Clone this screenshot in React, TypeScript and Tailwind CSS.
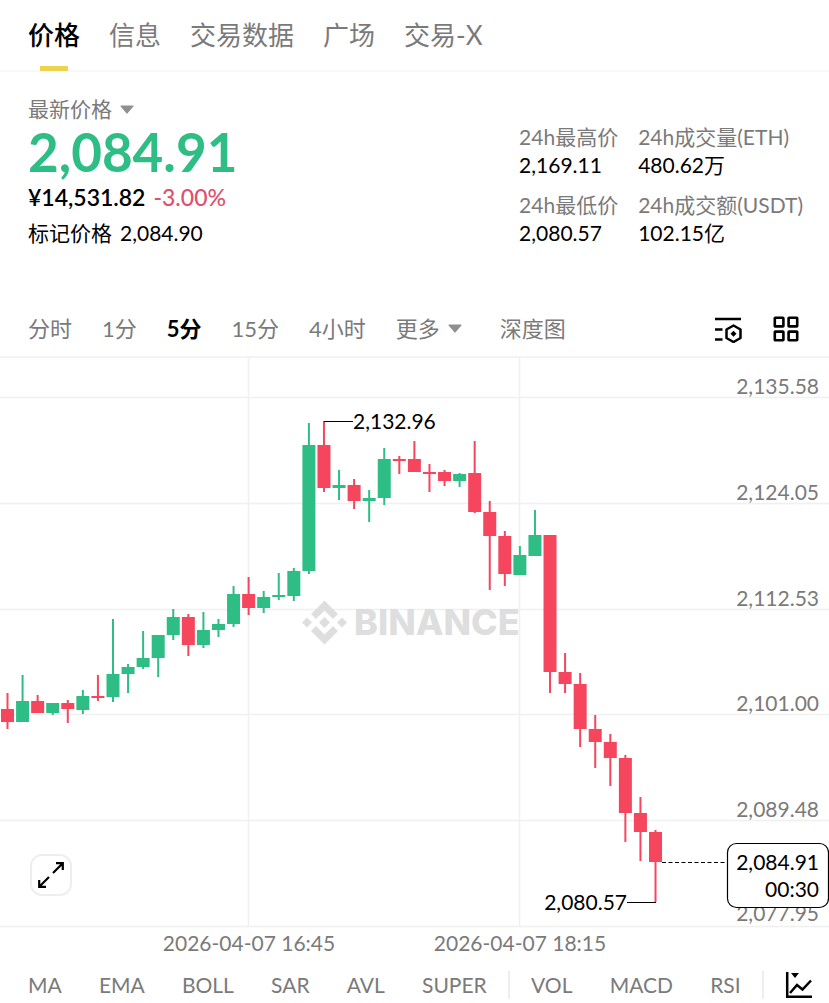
import React from "react";

const TABS = ["价格", "信息", "交易数据", "广场", "交易-X"];
const INTERVALS = ["分时", "1分", "5分", "15分", "4小时"];
const OVERLAYS = ["MA", "EMA", "BOLL", "SAR", "AVL", "SUPER"];
const OSCILLATORS = ["VOL", "MACD", "RSI"];

const UP = "#2ebd85";
const DOWN = "#f6465d";

// [direction, body top, body bottom, wick top, wick bottom] in chart units
type Candle = [1 | -1, number, number, number, number];
const CANDLES: Candle[] = [
  [-1, 351, 364, 335, 371],
  [1, 343, 364, 317, 364],
  [-1, 343, 355, 337, 355],
  [1, 345, 355, 345, 357],
  [-1, 345, 351, 342, 365],
  [1, 338, 352, 332, 356],
  [-1, 338, 340, 317, 343],
  [1, 316, 339, 261, 344],
  [1, 309, 316, 306, 335],
  [1, 300, 309, 273, 311],
  [1, 277, 300, 277, 319],
  [1, 259, 277, 251, 282],
  [-1, 259, 287, 256, 298],
  [1, 272, 287, 254, 290],
  [1, 266, 272, 261, 279],
  [1, 236, 266, 228, 269],
  [-1, 236, 250, 219, 257],
  [1, 239, 250, 233, 255],
  [1, 237, 239, 215, 242],
  [1, 213, 238, 210, 243],
  [1, 87, 213, 65, 216],
  [-1, 87, 130, 63, 134],
  [1, 127, 130, 112, 142],
  [-1, 127, 143, 121, 151],
  [1, 140, 143, 132, 164],
  [1, 101, 140, 90, 147],
  [-1, 101, 103, 98, 116],
  [-1, 101, 114, 83, 114],
  [-1, 114, 116, 106, 134],
  [-1, 114, 123, 112, 128],
  [1, 116, 123, 115, 129],
  [-1, 115, 154, 83, 155],
  [-1, 154, 178, 143, 232],
  [-1, 178, 216, 173, 228],
  [1, 197, 217, 188, 217],
  [1, 177, 198, 152, 198],
  [-1, 177, 314, 177, 335],
  [-1, 314, 326, 295, 335],
  [-1, 326, 371, 315, 389],
  [-1, 371, 384, 357, 410],
  [-1, 384, 400, 376, 428],
  [-1, 400, 455, 397, 484],
  [-1, 455, 474, 439, 503],
  [-1, 474, 504, 472, 544],
];

const LEVELS = [
  { y: 39, label: "2,135.58" },
  { y: 145, label: "2,124.05" },
  { y: 251, label: "2,112.53" },
  { y: 356, label: "2,101.00" },
  { y: 462, label: "2,089.48" },
  { y: 568, label: "2,077.95" },
];

const TIMES = [
  { x: 249, label: "2026-04-07 16:45" },
  { x: 520, label: "2026-04-07 18:15" },
];

function Caret() {
  return (
    <svg viewBox="0 0 14 9" className="h-[9px] w-[14px]" aria-hidden="true">
      <path d="M1 0.5h12a.6.6 0 0 1 .4 1L7.600 8.300a.8.8 0 0 1-1.200 0L.6 1.500a.6.6 0 0 1 .4-1z" fill="#8f8f8f" />
    </svg>
  );
}

function Stat({ label, value }: { label: string; value: string }) {
  return (
    <div>
      <dt className="text-[21px] leading-7 text-[#7a7a7a]">{label}</dt>
      <dd className="text-[21px] leading-7 text-black">{value}</dd>
    </div>
  );
}

function Chart() {
  return (
    <svg viewBox="0 0 829 604" className="block w-full text-[21px]" role="img" aria-label="ETH">
      <g stroke="#f0f0f0" strokeWidth="1.500">
        {LEVELS.map((l) => (
          <line key={l.y} x1="0" x2="829" y1={l.y + 0.5} y2={l.y + 0.5} />
        ))}
        {TIMES.map((t) => (
          <line key={t.x} x1={t.x - 0.5} x2={t.x - 0.5} y1="0" y2="568" />
        ))}
      </g>

      <g fill="#dcdcdc" fillOpacity="0.950">
        <g transform="translate(324.500 264.500)">
          <path d="M0-22 13.500-8.500 8.500-3.500 0-12-8.500-3.500-13.500-8.500z" />
          <path d="M0 22 13.500 8.500 8.500 3.500 0 12-8.500 3.500-13.500 8.500z" />
          <path d="M0-5.500 5.500 0 0 5.500-5.500 0z" />
          <path d="M-17.500-5-12.500 0-17.500 5-22.500 0z" />
          <path d="M17.500-5 22.500 0 17.500 5 12.500 0z" />
        </g>
        <text x="354" y="277" className="font-[Inter] text-[36px] font-extrabold">
          BINANCE
        </text>
      </g>

      {CANDLES.map(([dir, top, bottom, high, low], i) => {
        const x = 7.5 + i * 15.07;
        return (
          <g key={i} fill={dir > 0 ? UP : DOWN}>
            <rect x={x - 1} y={high} width="2" height={low - high} />
            <rect x={x - 6.5} y={top} width="13" height={bottom - top} />
          </g>
        );
      })}

      <g fill="#7a7a7a" textAnchor="end">
        {LEVELS.map((l) => (
          <text key={l.label} x="819" y={l.y === 568 ? 563 : l.y - 3}>
            {l.label}
          </text>
        ))}
      </g>
      <g fill="#7a7a7a" textAnchor="middle">
        {TIMES.map((t) => (
          <text key={t.label} x={t.x} y="593">
            {t.label}
          </text>
        ))}
      </g>

      <g stroke="#000" strokeWidth="1.200" fill="none">
        <path d="M324 63.500h29M627 544.500h29" />
        <path d="M662 504.500h65" strokeDasharray="4 2.500" />
        <rect x="727.500" y="485.500" width="101" height="64" rx="9" fill="#fff" />
      </g>
      <text x="353" y="71">2,132.96</text>
      <text x="627" y="552" textAnchor="end">2,080.57</text>
      <text x="819" y="512" textAnchor="end">2,084.91</text>
      <text x="819" y="539" textAnchor="end">00:30</text>
    </svg>
  );
}

export default function App() {
  return (
    <main className="min-w-0 bg-white font-[Lato,'Noto_Sans_CJK_SC',sans-serif] text-black">
      <nav className="flex h-18 gap-[29px] border-b-2 border-[#f8f8f8] px-7 text-[26px] whitespace-nowrap">
        {TABS.map((tab, i) => (
          <button
            key={tab}
            className={
              i === 0
                ? "relative flex h-[71px] items-center font-medium text-black"
                : "flex h-[71px] items-center text-[#7a7a7a]"
            }
          >
            {tab}
            {i === 0 && <span className="absolute inset-x-3 bottom-0 h-[5px] bg-[#edd34f]" />}
          </button>
        ))}
      </nav>

      <section className="flex justify-between pt-[23px] pr-[26px] pl-7">
        <div className="flex flex-col items-start">
          <button className="flex items-center gap-2 text-[21px] leading-7 text-[#7a7a7a]">
            最新价格
            <Caret />
          </button>
          <div className="text-[53px] leading-[58px] font-bold text-[#2ebd85]">2,084.91</div>
          <div className="flex gap-2 text-[23px] leading-8">
            <span className="font-semibold">¥14,531.82</span>
            <span className="font-medium text-[#e0506c]">-3.00%</span>
          </div>
          <div className="flex gap-2 text-[21px] leading-10">
            <span>标记价格</span>
            <span>2,084.90</span>
          </div>
        </div>
        <dl className="grid grid-cols-[auto_auto] content-start gap-x-5 gap-y-3 pt-7 whitespace-nowrap">
          <Stat label="24h最高价" value="2,169.11" />
          <Stat label="24h成交量(ETH)" value="480.62万" />
          <Stat label="24h最低价" value="2,080.57" />
          <Stat label="24h成交额(USDT)" value="102.15亿" />
        </dl>
      </section>

      <section className="mt-12 flex h-[57px] items-center justify-between border-b-2 border-[#f3f3f3] pr-[30px] pl-7">
        <div className="flex items-center gap-[30px] text-[22px] whitespace-nowrap text-[#7a7a7a]">
          {INTERVALS.map((label) => (
            <button key={label} className={label === "5分" ? "font-bold text-black" : ""}>
              {label}
            </button>
          ))}
          <button className="flex items-center gap-2">
            更多
            <Caret />
          </button>
          <button className="pl-2">深度图</button>
        </div>
        <div className="flex items-center gap-[30px]">
          <button aria-label="指标设置">
            <svg viewBox="0 0 28 28" className="size-7" fill="none" stroke="#000" strokeWidth="2.500">
              <path d="M0 4h26M0 14.500h7.500M0 24.500h7.500" />
              <path d="M18.500 10.500l7 4v8.500l-7 4-7-4v-8.500z" strokeLinejoin="round" />
              <path d="M18.500 15.700l3 3-3 3-3-3z" fill="#000" stroke="none" />
            </svg>
          </button>
          <button aria-label="布局">
            <svg viewBox="0 0 26 26" className="size-[26px]" fill="none" stroke="#000" strokeWidth="2.600">
              <rect x="1.800" y="1.800" width="8.600" height="8.600" rx="0.500" />
              <rect x="15.600" y="1.800" width="8.600" height="8.600" rx="0.500" />
              <rect x="1.800" y="15.600" width="8.600" height="8.600" rx="0.500" />
              <rect x="15.600" y="15.600" width="8.600" height="8.600" rx="0.500" />
            </svg>
          </button>
        </div>
      </section>

      <section className="relative">
        <Chart />
        <button
          aria-label="全屏"
          className="absolute bottom-[66px] left-[30px] flex size-[42px] items-center justify-center rounded-xl border-2 border-[#eeeeee] bg-white"
        >
          <svg viewBox="0 0 26 26" className="size-[26px]" fill="none" stroke="#000" strokeWidth="2.200">
            <path d="M15 11 24.500 1.500M18 1.200h6.800V8M11 15 1.500 24.500M1.200 18v6.800H8" />
          </svg>
        </button>
      </section>

      <footer className="flex h-[46px] items-center justify-between pr-4 pl-7 text-[21px] text-[#7a7a7a]">
        {OVERLAYS.map((name) => (
          <button key={name}>{name}</button>
        ))}
        <span className="-mx-4 h-7 w-0.5 bg-[#eeeeee]" />
        {OSCILLATORS.map((name) => (
          <button key={name}>{name}</button>
        ))}
        <span className="-mx-4 h-7 w-0.5 bg-[#eeeeee]" />
        <button aria-label="图表">
          <svg viewBox="0 0 28 28" className="size-7" fill="none" stroke="#000" strokeWidth="2.500">
            <path d="M2.200 1v24.800H27" />
            <path d="M5 22l7-8 5.500 4.500L26 9.500" />
            <path d="M6 2h8l-4 5z" fill="#000" stroke="none" />
          </svg>
        </button>
      </footer>
    </main>
  );
}
